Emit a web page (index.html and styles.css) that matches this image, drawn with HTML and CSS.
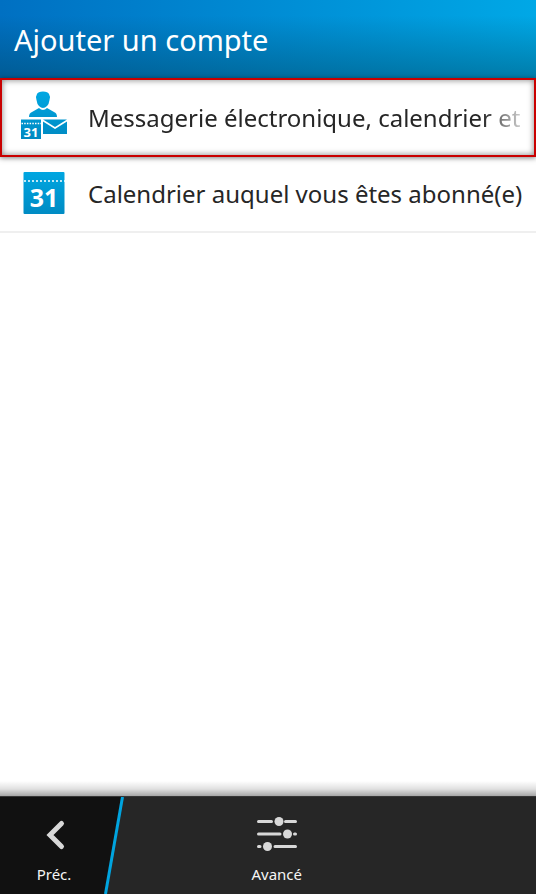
FILE: index.html
```html
<!DOCTYPE html>
<html lang="fr">
<head>
<meta charset="utf-8">
<meta name="viewport" content="width=device-width, initial-scale=1">
<title>Ajouter un compte</title>
<link rel="stylesheet" href="styles.css">
</head>
<body>
<header class="title-bar"><h1>Ajouter un compte</h1></header>
<main class="content">
  <ul class="accounts">
    <li>
      <button class="account selected" type="button">
        <svg class="account-icon" viewBox="0 2 48 50" aria-hidden="true">
          <defs>
            <linearGradient id="blue" x1="0" y1="0" x2="0" y2="50" gradientUnits="userSpaceOnUse">
              <stop offset="0" stop-color="#00a8e3"/><stop offset="1" stop-color="#0088c0"/>
            </linearGradient>
          </defs>
          <g fill="url(#blue)">
            <path d="M17 3Q18 .500 23 .500T29 3Q30.500 5 29.500 9Q29 13 27 15Q25 17 23 17T19 15Q17 13 16.500 9Q15.500 5 17 3Z"/>
            <path d="M9 26Q9 22 12 21L19 17Q21 19 23 19T27 17L34 21Q37 22 37 26Z"/>
            <path d="M1 28.500H21V48H1Z"/>
            <path d="M23 28.500H47L35 36Z"/>
            <path d="M23 30.500L35 38L47 30.500V43H23Z"/>
          </g>
          <path d="M1.500 32.500H21" stroke="#fff" stroke-width="1.500" stroke-dasharray="1.500 1.200"/>
          <text class="day-small" x="11" y="46">31</text>
        </svg>
        <span class="label">Messagerie électronique, calendrier et</span>
      </button>
    </li>
    <li>
      <button class="account" type="button">
        <svg class="account-icon" viewBox="0 0 48 50" aria-hidden="true">
          <rect x="3.500" y="3" width="41" height="42" rx="1" fill="url(#blue)"/>
          <path d="M4 12H45" stroke="#fff" stroke-width="1.500" stroke-dasharray="2 2"/>
          <text class="day" x="24" y="38">31</text>
        </svg>
        <span class="label">Calendrier auquel vous êtes abonné(e)</span>
      </button>
    </li>
  </ul>
</main>
<footer class="action-bar">
  <button class="action back" type="button">
    <svg class="action-icon" viewBox="0 0 44 44" aria-hidden="true">
      <path d="M29.500 11.500L18 23L29.500 34.500" fill="none" stroke="#d8d8d8" stroke-width="5" stroke-linecap="round"/>
    </svg>
    <span>Préc.</span>
  </button>
  <svg class="divider" viewBox="0 0 20 98" preserveAspectRatio="none" aria-hidden="true">
    <path d="M0 0H19L2 98H0Z" fill="#111"/>
    <path d="M18.500 0L1.500 98" stroke="#00a4df" stroke-width="3"/>
  </svg>
  <button class="action advanced" type="button">
    <svg class="action-icon" viewBox="0 0 44 44" aria-hidden="true">
      <g stroke="#d8d8d8" stroke-width="3" stroke-linecap="round">
        <path d="M3.500 9.500H16.500M30.500 9.500H40.500M3.500 22H25M39.500 22H40.500M3.500 34.500H5M20 34.500H40.500"/>
      </g>
      <g fill="#d8d8d8">
        <circle cx="24" cy="9.500" r="4.500"/><circle cx="32.500" cy="22" r="4.500"/><circle cx="12.500" cy="34.500" r="4.500"/>
      </g>
    </svg>
    <span>Avancé</span>
  </button>
</footer>
</body>
</html>
```
FILE: styles.css
```css
* { box-sizing: border-box; }

body {
  margin: 0;
  min-height: 100vh;
  display: flex;
  flex-direction: column;
  background: #fff;
  color: #262626;
  font-family: "Noto Sans", "Open Sans", sans-serif;
}

button {
  border: 0;
  margin: 0;
  padding: 0;
  background: none;
  color: inherit;
  font: inherit;
}

.title-bar {
  height: 78px;
  padding: 20px 14px;
  background:
    linear-gradient(transparent 20%, rgba(0, 60, 80, 0.4)),
    linear-gradient(90deg, #0070c2, #00a8e6);
}

.title-bar h1 {
  margin: 0;
  color: #fff;
  font-size: 29px;
  line-height: 40px;
  font-weight: 400;
}

.content { flex: 1; }

.accounts {
  margin: 0;
  padding: 0;
  list-style: none;
}

.account {
  width: 100%;
  height: 76px;
  padding: 0 8px 0 20px;
  display: flex;
  align-items: center;
  gap: 20px;
  border-bottom: 2px solid #efefef;
  text-align: left;
}

.account.selected {
  position: relative;
  height: 79px;
  padding: 0 12px 0 18px;
  border: 2px solid #c90000;
  box-shadow: inset 0 0 6px rgba(0, 0, 0, 0.5), 0 1px 5px rgba(0, 0, 0, 0.5);
}

.account-icon {
  flex: none;
  width: 48px;
  height: 50px;
  overflow: visible;
}

.label {
  flex: 1;
  min-width: 0;
  white-space: nowrap;
  font-size: 24px;
  line-height: 36px;
}

.selected .label {
  mask-image: linear-gradient(90deg, #000 calc(100% - 40px), rgba(0, 0, 0, 0.2));
}

.day,
.day-small {
  fill: #fff;
  font-family: "Noto Sans", sans-serif;
  font-weight: 700;
  text-anchor: middle;
}

.day { font-size: 25px; }
.day-small { font-size: 13px; }

.action-bar {
  position: relative;
  height: 98px;
  display: flex;
  background: #262626;
  border-top: 1px solid #555;
  color: #f5f5f5;
}

.action-bar::before {
  content: "";
  position: absolute;
  right: 0;
  bottom: 100%;
  left: 0;
  height: 16px;
  background: linear-gradient(transparent, rgba(0, 0, 0, 0.12) 50%, rgba(0, 0, 0, 0.38));
}

.action {
  display: flex;
  flex-direction: column;
  align-items: center;
  gap: 8px;
  padding-top: 15px;
  font-size: 15px;
  line-height: 20px;
}

.back {
  width: 104px;
  padding-left: 4px;
  background: #111;
}

.action-icon {
  width: 44px;
  height: 44px;
}

.divider {
  flex: none;
  width: 20px;
  height: 100%;
}

.advanced { width: 57%; }
```
